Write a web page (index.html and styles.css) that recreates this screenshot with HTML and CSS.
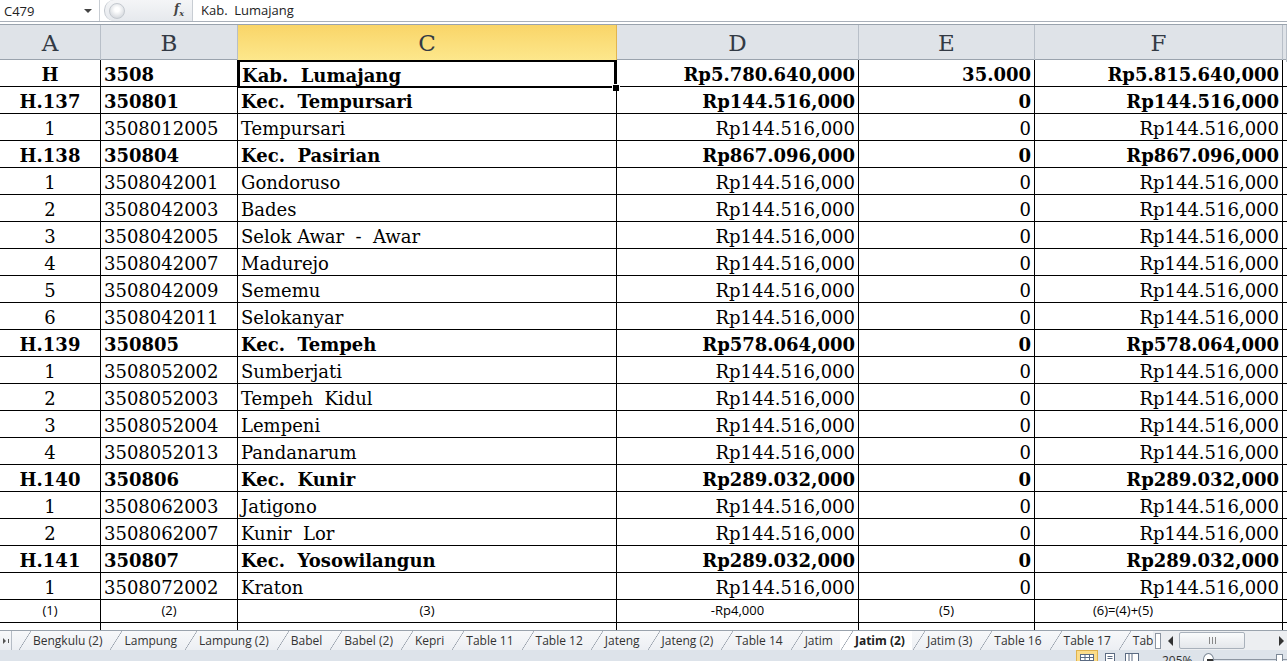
FILE: index.html
```html
<!DOCTYPE html>
<html lang="id">
<head>
    <meta charset="UTF-8">
    <title>Jatim (2) - Excel</title>
    <link rel="stylesheet" href="styles.css">
</head>
<body>
    <div class="formula-bar">
        <div class="name-box">
            <span>C479</span>
            <span class="caret"></span>
        </div>
        <div class="splitter"><span class="knob"></span></div>
        <div class="fx">f<sub>x</sub></div>
        <div class="formula">Kab.  Lumajang</div>
    </div>

    <div class="headers">
        <div class="col-head">A</div>
        <div class="col-head">B</div>
        <div class="col-head active">C</div>
        <div class="col-head">D</div>
        <div class="col-head">E</div>
        <div class="col-head">F</div>
        <div class="col-head"></div>
    </div>

    <div class="sheet">
        <div class="row bold">
            <div class="cell c">H</div>
            <div class="cell">3508</div>
            <div class="cell selected">Kab.  Lumajang<span class="fill-handle"></span></div>
            <div class="cell r">Rp5.780.640,000</div>
            <div class="cell r">35.000</div>
            <div class="cell r">Rp5.815.640,000</div>
            <div class="cell"></div>
        </div>
        <div class="row bold">
            <div class="cell c">H.137</div>
            <div class="cell">350801</div>
            <div class="cell">Kec.  Tempursari</div>
            <div class="cell r">Rp144.516,000</div>
            <div class="cell r">0</div>
            <div class="cell r">Rp144.516,000</div>
            <div class="cell"></div>
        </div>
        <div class="row">
            <div class="cell c">1</div>
            <div class="cell">3508012005</div>
            <div class="cell">Tempursari</div>
            <div class="cell r">Rp144.516,000</div>
            <div class="cell r">0</div>
            <div class="cell r">Rp144.516,000</div>
            <div class="cell"></div>
        </div>
        <div class="row bold">
            <div class="cell c">H.138</div>
            <div class="cell">350804</div>
            <div class="cell">Kec.  Pasirian</div>
            <div class="cell r">Rp867.096,000</div>
            <div class="cell r">0</div>
            <div class="cell r">Rp867.096,000</div>
            <div class="cell"></div>
        </div>
        <div class="row">
            <div class="cell c">1</div>
            <div class="cell">3508042001</div>
            <div class="cell">Gondoruso</div>
            <div class="cell r">Rp144.516,000</div>
            <div class="cell r">0</div>
            <div class="cell r">Rp144.516,000</div>
            <div class="cell"></div>
        </div>
        <div class="row">
            <div class="cell c">2</div>
            <div class="cell">3508042003</div>
            <div class="cell">Bades</div>
            <div class="cell r">Rp144.516,000</div>
            <div class="cell r">0</div>
            <div class="cell r">Rp144.516,000</div>
            <div class="cell"></div>
        </div>
        <div class="row">
            <div class="cell c">3</div>
            <div class="cell">3508042005</div>
            <div class="cell">Selok Awar  -  Awar</div>
            <div class="cell r">Rp144.516,000</div>
            <div class="cell r">0</div>
            <div class="cell r">Rp144.516,000</div>
            <div class="cell"></div>
        </div>
        <div class="row">
            <div class="cell c">4</div>
            <div class="cell">3508042007</div>
            <div class="cell">Madurejo</div>
            <div class="cell r">Rp144.516,000</div>
            <div class="cell r">0</div>
            <div class="cell r">Rp144.516,000</div>
            <div class="cell"></div>
        </div>
        <div class="row">
            <div class="cell c">5</div>
            <div class="cell">3508042009</div>
            <div class="cell">Sememu</div>
            <div class="cell r">Rp144.516,000</div>
            <div class="cell r">0</div>
            <div class="cell r">Rp144.516,000</div>
            <div class="cell"></div>
        </div>
        <div class="row">
            <div class="cell c">6</div>
            <div class="cell">3508042011</div>
            <div class="cell">Selokanyar</div>
            <div class="cell r">Rp144.516,000</div>
            <div class="cell r">0</div>
            <div class="cell r">Rp144.516,000</div>
            <div class="cell"></div>
        </div>
        <div class="row bold">
            <div class="cell c">H.139</div>
            <div class="cell">350805</div>
            <div class="cell">Kec.  Tempeh</div>
            <div class="cell r">Rp578.064,000</div>
            <div class="cell r">0</div>
            <div class="cell r">Rp578.064,000</div>
            <div class="cell"></div>
        </div>
        <div class="row">
            <div class="cell c">1</div>
            <div class="cell">3508052002</div>
            <div class="cell">Sumberjati</div>
            <div class="cell r">Rp144.516,000</div>
            <div class="cell r">0</div>
            <div class="cell r">Rp144.516,000</div>
            <div class="cell"></div>
        </div>
        <div class="row">
            <div class="cell c">2</div>
            <div class="cell">3508052003</div>
            <div class="cell">Tempeh  Kidul</div>
            <div class="cell r">Rp144.516,000</div>
            <div class="cell r">0</div>
            <div class="cell r">Rp144.516,000</div>
            <div class="cell"></div>
        </div>
        <div class="row">
            <div class="cell c">3</div>
            <div class="cell">3508052004</div>
            <div class="cell">Lempeni</div>
            <div class="cell r">Rp144.516,000</div>
            <div class="cell r">0</div>
            <div class="cell r">Rp144.516,000</div>
            <div class="cell"></div>
        </div>
        <div class="row">
            <div class="cell c">4</div>
            <div class="cell">3508052013</div>
            <div class="cell">Pandanarum</div>
            <div class="cell r">Rp144.516,000</div>
            <div class="cell r">0</div>
            <div class="cell r">Rp144.516,000</div>
            <div class="cell"></div>
        </div>
        <div class="row bold">
            <div class="cell c">H.140</div>
            <div class="cell">350806</div>
            <div class="cell">Kec.  Kunir</div>
            <div class="cell r">Rp289.032,000</div>
            <div class="cell r">0</div>
            <div class="cell r">Rp289.032,000</div>
            <div class="cell"></div>
        </div>
        <div class="row">
            <div class="cell c">1</div>
            <div class="cell">3508062003</div>
            <div class="cell">Jatigono</div>
            <div class="cell r">Rp144.516,000</div>
            <div class="cell r">0</div>
            <div class="cell r">Rp144.516,000</div>
            <div class="cell"></div>
        </div>
        <div class="row">
            <div class="cell c">2</div>
            <div class="cell">3508062007</div>
            <div class="cell">Kunir  Lor</div>
            <div class="cell r">Rp144.516,000</div>
            <div class="cell r">0</div>
            <div class="cell r">Rp144.516,000</div>
            <div class="cell"></div>
        </div>
        <div class="row bold">
            <div class="cell c">H.141</div>
            <div class="cell">350807</div>
            <div class="cell">Kec.  Yosowilangun</div>
            <div class="cell r">Rp289.032,000</div>
            <div class="cell r">0</div>
            <div class="cell r">Rp289.032,000</div>
            <div class="cell"></div>
        </div>
        <div class="row">
            <div class="cell c">1</div>
            <div class="cell">3508072002</div>
            <div class="cell">Kraton</div>
            <div class="cell r">Rp144.516,000</div>
            <div class="cell r">0</div>
            <div class="cell r">Rp144.516,000</div>
            <div class="cell"></div>
        </div>
        <div class="row small">
            <div class="cell c">(1)</div>
            <div class="cell c">(2)</div>
            <div class="cell c">(3)</div>
            <div class="cell c">-Rp4,000</div>
            <div class="cell c">(5)</div>
            <div class="cell formula-col">(6)=(4)+(5)</div>
            <div class="cell"></div>
        </div>
        <div class="row">
            <div class="cell c">2</div>
            <div class="cell">3508072005</div>
            <div class="cell">Kraton  Kidul</div>
            <div class="cell r">Rp144.516,000</div>
            <div class="cell r">0</div>
            <div class="cell r">Rp144.516,000</div>
            <div class="cell"></div>
        </div>
    </div>

    <div class="tab-bar">
        <div class="tab-nav"><span class="nav-arrow"></span></div>
        <div class="tabs">
            <span class="tab">Bengkulu (2)</span>
            <span class="tab">Lampung</span>
            <span class="tab">Lampung (2)</span>
            <span class="tab">Babel</span>
            <span class="tab">Babel (2)</span>
            <span class="tab">Kepri</span>
            <span class="tab">Table 11</span>
            <span class="tab">Table 12</span>
            <span class="tab">Jateng</span>
            <span class="tab">Jateng (2)</span>
            <span class="tab">Table 14</span>
            <span class="tab">Jatim</span>
            <span class="tab current">Jatim (2)</span>
            <span class="tab">Jatim (3)</span>
            <span class="tab">Table 16</span>
            <span class="tab">Table 17</span>
            <span class="tab last">Tab</span>
        </div>
        <div class="hscroll">
            <span class="grip"></span>
            <span class="arrow left"></span>
            <span class="thumb"></span>
            <span class="track"></span>
            <span class="arrow right"></span>
        </div>
    </div>

    <div class="status-bar">
        <div class="views">
            <span class="view on">
                <svg width="16" height="11" viewBox="0 0 16 11"><rect x="1.5" y="1.5" width="13" height="9" fill="#fff" stroke="#5b6b82"/><path d="M1.5 4.5h13M1.5 7.5h13M6 1.5v9M10.5 1.5v9" stroke="#5b6b82"/></svg>
            </span>
            <span class="view">
                <svg width="14" height="11" viewBox="0 0 14 11"><rect x="2.5" y="1.5" width="9" height="9" fill="#fff" stroke="#5b6b82"/><path d="M4.5 4.5h5M4.5 6.5h5" stroke="#5b6b82"/></svg>
            </span>
            <span class="view">
                <svg width="16" height="11" viewBox="0 0 16 11"><rect x="1.5" y="1.5" width="13" height="9" fill="#fff" stroke="#5b6b82"/><path d="M8 1.5v9M5 1.5v9" stroke="#5b6b82"/></svg>
            </span>
        </div>
        <span class="zoom-level">205%</span>
        <span class="zoom-minus"></span>
        <span class="zoom-track"><span class="zoom-thumb"></span></span>
    </div>
</body>
</html>
```

FILE: styles.css
```css
html, body {
    margin: 0;
    padding: 0;
    width: 1287px;
    height: 661px;
    overflow: hidden;
    background: #fff;
    font-family: "DejaVu Serif", serif;
}

/* formula bar */

.formula-bar {
    display: flex;
    align-items: center;
    height: 21px;
    border-bottom: 1px solid #a9b0b9;
    font-family: "Open Sans", "Noto Sans", sans-serif;
    font-size: 13px;
    color: #222;
}

.name-box {
    width: 100px;
    height: 21px;
    box-sizing: border-box;
    display: flex;
    align-items: center;
    justify-content: space-between;
    padding: 0 4px 0 4px;
    border-right: 1px solid #c8cdd3;
}

.caret {
    width: 0;
    height: 0;
    border-left: 4px solid transparent;
    border-right: 4px solid transparent;
    border-top: 4px solid #444;
    margin-right: 3px;
}

.splitter {
    width: 88px;
    height: 21px;
    display: flex;
    align-items: center;
    background: linear-gradient(#f4f5f7, #e6e9ed);
    border-radius: 10px 0 0 10px;
    border-left: 1px solid #c3c8cf;
    margin-left: 4px;
}

.knob {
    width: 14px;
    height: 14px;
    border-radius: 50%;
    margin-left: 4px;
    background: radial-gradient(circle at 50% 40%, #fff 20%, #d3d7dc 80%);
    border: 1px solid #c4c9cf;
}

.fx {
    width: 18px;
    margin-left: -19px;
    font-family: "DejaVu Serif", serif;
    font-style: italic;
    font-weight: bold;
    font-size: 12px;
    color: #444;
}

.fx sub {
    font-size: 8px;
}

.formula {
    flex: 1;
    height: 21px;
    line-height: 21px;
    padding-left: 8px;
    border-left: 1px solid #c8cdd3;
    white-space: pre;
}

/* column headers */

.headers {
    display: grid;
    grid-template-columns: 101px 137px 379px 242px 176px 248px 1fr;
    height: 34px;
    margin-top: 2px;
    border-top: 1px solid #9aa3ad;
    border-bottom: 1px solid #9aa3ad;
    background: #dfe3e8;
}

.col-head {
    border-right: 1px solid #b8bfc8;
    text-align: center;
    line-height: 37px;
    font-size: 23px;
    color: #333a44;
}

.col-head.active {
    background: linear-gradient(#f9d568, #fde88e);
    border-right-color: #e2b54e;
    box-shadow: inset 0 -1px 0 #e2b54e;
}

/* data */

.sheet {
    height: 570px;
    overflow: hidden;
    font-size: 18px;
    color: #000;
}

.row {
    display: grid;
    grid-template-columns: 101px 137px 379px 242px 176px 248px 1fr;
    height: 27px;
    border-bottom: 1px solid #000;
    box-sizing: border-box;
}

.row.bold {
    font-weight: bold;
}

.cell {
    position: relative;
    border-right: 1px solid #000;
    padding: 3px 3px 0;
    line-height: 24px;
    white-space: pre;
    overflow: hidden;
}

.row .cell:last-child {
    border-right: none;
}

.cell.c {
    text-align: center;
}

.cell.r {
    text-align: right;
}

.cell.selected {
    overflow: visible;
    box-shadow: inset 0 0 0 2px #000, inset 0 0 0 3px #fff;
    margin: -1px 0 0 -1px;
    border-top: 1px solid #000;
    border-left: 1px solid #000;
    padding-top: 4px;
    padding-left: 4px;
}

.fill-handle {
    position: absolute;
    right: -4px;
    bottom: -4px;
    width: 6px;
    height: 6px;
    background: #000;
    border: 1px solid #fff;
}

.row.small {
    height: 23px;
    font-family: "Open Sans", "Noto Sans", sans-serif;
    font-size: 13px;
}

.row.small .cell {
    line-height: 18px;
    padding-top: 1px;
}

.cell.formula-col {
    padding-left: 58px;
}

/* sheet tabs */

.tab-bar {
    display: flex;
    height: 20px;
    background: linear-gradient(#f7f8fa, #eceff3);
    border-top: 1px solid #9aa3ad;
    font-family: "Open Sans", "Noto Sans", sans-serif;
    font-size: 12px;
    color: #333;
    box-sizing: border-box;
}

.tab-nav {
    width: 11px;
    display: flex;
    align-items: center;
    border-right: 1px solid #b5bcc5;
}

.nav-arrow {
    width: 0;
    height: 0;
    border-top: 3px solid transparent;
    border-bottom: 3px solid transparent;
    border-left: 3px solid #555;
    margin-left: 3px;
    box-shadow: 4px 0 0 -1px #555;
}

.tabs {
    display: flex;
    flex: 1;
    overflow: hidden;
    padding-left: 6px;
}

.tab {
    position: relative;
    padding: 0 7px 0 15px;
    line-height: 19px;
    white-space: nowrap;
}

.tab::before {
    content: "";
    position: absolute;
    left: 1px;
    top: 0;
    bottom: 0;
    width: 12px;
    background: linear-gradient(to top left, transparent calc(50% - 0.6px), #8d96a2 50%, transparent calc(50% + 0.6px));
}

.tab.last {
    padding-right: 2px;
}

.tab.current {
    background: #fff;
    font-weight: bold;
    color: #222;
}

.hscroll {
    width: 134px;
    display: flex;
    align-items: center;
    background: #eceef1;
}

.grip {
    width: 4px;
    height: 14px;
    margin: 0 4px 0 2px;
    border: 1px solid #8d96a2;
    background: #fff;
}

.arrow {
    width: 0;
    height: 0;
    margin: 0 3px;
    border-top: 5px solid transparent;
    border-bottom: 5px solid transparent;
}

.arrow.left {
    border-right: 5px solid #333;
}

.arrow.right {
    border-left: 5px solid #333;
}

.thumb {
    width: 64px;
    height: 15px;
    margin-left: 3px;
    border: 1px solid #a9b1bb;
    border-radius: 2px;
    background:
        linear-gradient(90deg, transparent 29px, #888 29px, #888 30px, transparent 30px, transparent 32px, #888 32px, #888 33px, transparent 33px, transparent 35px, #888 35px, #888 36px, transparent 36px) center / 100% 7px no-repeat,
        linear-gradient(#fafbfc, #e4e7eb);
}

.track {
    flex: 1;
}

/* status bar */

.status-bar {
    display: flex;
    align-items: center;
    height: 11px;
    padding-left: 1076px;
    background: #dde3ea;
    font-family: "Open Sans", "Noto Sans", sans-serif;
    font-size: 12px;
    color: #333;
    overflow: hidden;
}

.views {
    display: flex;
    gap: 3px;
    padding-top: 6px;
}

.view {
    display: flex;
    padding: 2px 2px;
}

.view.on {
    background: #fbdc8a;
    border: 1px solid #e0b24c;
}

.zoom-level {
    margin-left: 20px;
    padding-top: 9px;
}

.zoom-minus {
    position: relative;
    width: 12px;
    height: 12px;
    margin: 8px 0 0 10px;
    border: 1px solid #7c8896;
    border-radius: 50%;
    background: #fff;
}

.zoom-minus::after {
    content: "";
    position: absolute;
    left: 3px;
    top: 5px;
    width: 6px;
    height: 2px;
    background: #333;
}

.zoom-track {
    position: relative;
    width: 90px;
    height: 1px;
    margin-top: 8px;
    background: #8d96a2;
}

.zoom-thumb {
    position: absolute;
    left: 62px;
    top: -5px;
    width: 5px;
    height: 10px;
    border: 1px solid #7c8896;
    background: #fff;
}
```
